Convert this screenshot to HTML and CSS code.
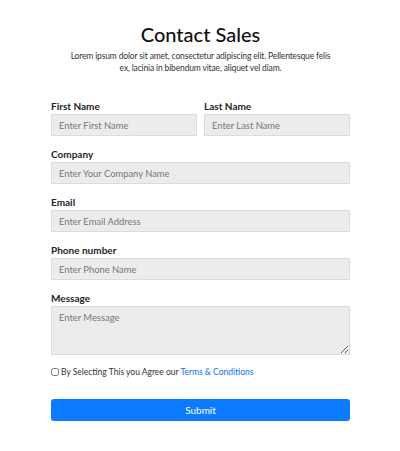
FILE: index.html
```html
<!DOCTYPE html>
<html>
<head>
<meta charset="utf-8">
<link rel="stylesheet" href="styles.css">
</head>
<body>
<main class="wrap">
  <h1 class="title">Contact Sales</h1>
  <p class="lead">Lorem ipsum dolor sit amet, consectetur adipiscing elit. Pellentesque felis ex, lacinia in bibendum vitae, aliquet vel diam.</p>
  <form class="form">
    <div class="row">
      <div class="field">
        <label class="label">First Name</label>
        <input class="input" placeholder="Enter First Name">
      </div>
      <div class="field">
        <label class="label">Last Name</label>
        <input class="input" placeholder="Enter Last Name">
      </div>
    </div>
    <div class="field">
      <label class="label">Company</label>
      <input class="input" placeholder="Enter Your Company Name">
    </div>
    <div class="field">
      <label class="label">Email</label>
      <input class="input" placeholder="Enter Email Address">
    </div>
    <div class="field">
      <label class="label">Phone number</label>
      <input class="input" placeholder="Enter Phone Name">
    </div>
    <div class="field">
      <label class="label">Message</label>
      <textarea class="input textarea" placeholder="Enter Message"></textarea>
    </div>
    <label class="check"><input type="checkbox" class="box"><span>By Selecting This you Agree our <a class="link" href="#">Terms &amp; Conditions</a></span></label>
    <button type="button" class="submit">Submit</button>
  </form>
</main>
</body>
</html>
```
FILE: styles.css
```css
* { box-sizing: border-box; }
body {
  margin: 0;
  background: #fff;
  font-family: "Lato", "Open Sans", sans-serif;
  color: #212529;
}
.wrap {
  width: 299px;
  margin: 0 0 0 51px;
  padding-top: 22px;
}
.title {
  margin: 0;
  text-align: center;
  font-size: 20px;
  font-weight: 500;
  line-height: 24px;
  color: #111;
}
.lead {
  margin: 4px 0 0;
  text-align: center;
  font-size: 8.5px;
  letter-spacing: -0.15px;
  line-height: 12px;
  color: #333;
  padding: 0 16px;
}
.form {
  margin-top: 26px;
  display: flex;
  flex-direction: column;
  gap: 12px;
}
.row {
  display: grid;
  grid-template-columns: 1fr 1fr;
  gap: 7px;
}
.field {
  display: flex;
  flex-direction: column;
  gap: 2px;
}
.label {
  font-size: 10px;
  font-weight: 700;
  line-height: 12px;
  color: #212529;
}
.input {
  height: 22px;
  width: 100%;
  border: 1px solid #dcdcdc;
  background: #ececec;
  font-family: inherit;
  font-size: 9.4px;
  padding: 0 7px;
  color: #333;
  outline: none;
}
.input::placeholder { color: #777; }
.textarea {
  height: 49px;
  padding: 5px 7px;
  resize: vertical;
}
.check {
  display: flex;
  align-items: center;
  gap: 2px;
  font-size: 8.5px;
  color: #333;
  margin-top: 0;
}
.box {
  margin: 0;
  width: 8px;
  height: 8px;
}
.link { color: #0d6efd; text-decoration: none; }
.submit {
  margin-top: 10px;
  height: 22px;
  border: none;
  border-radius: 3px;
  background: #0d7bff;
  color: #fff;
  font-family: inherit;
  font-size: 10px;
}
```
